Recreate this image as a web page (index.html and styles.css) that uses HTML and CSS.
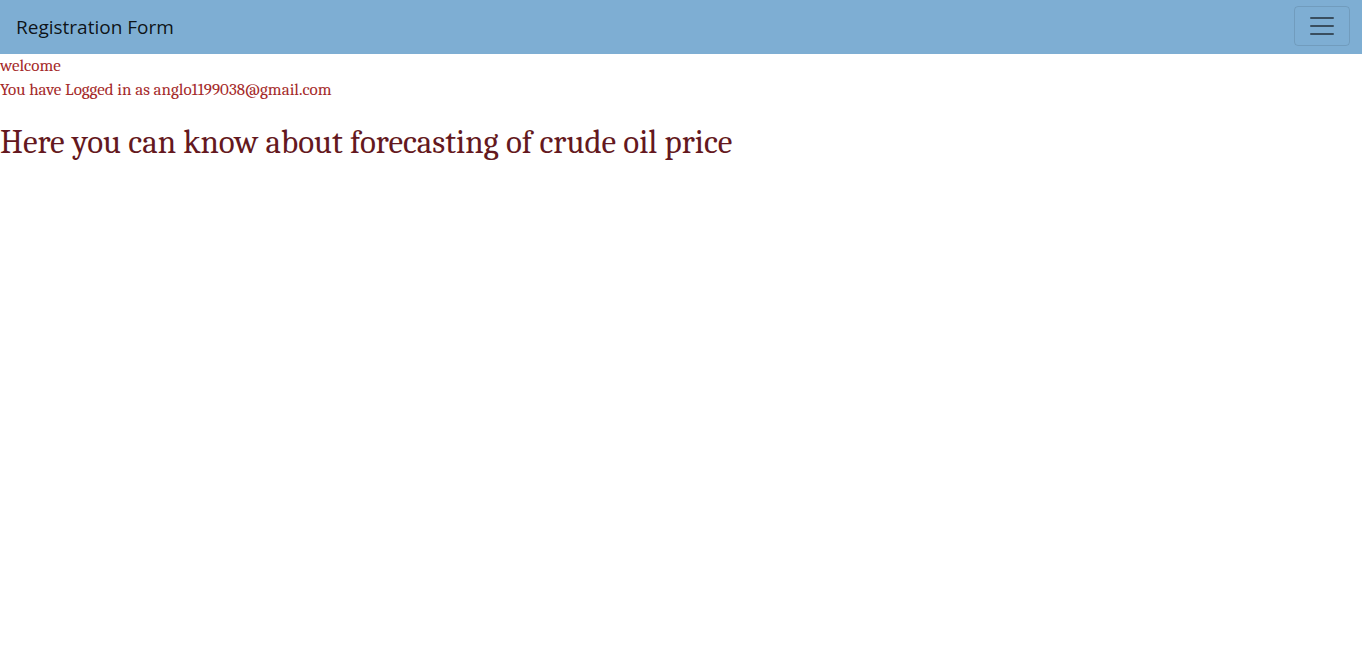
FILE: index.html
```html
<!DOCTYPE html>
<html lang="en">
<head>
<meta charset="utf-8">
<meta name="viewport" content="width=device-width, initial-scale=1">
<title>Registration Form</title>
<link rel="stylesheet" href="styles.css">
</head>
<body>
<nav class="navbar">
  <a class="navbar-brand" href="#">Registration Form</a>
  <button class="navbar-toggler" type="button" aria-label="Toggle navigation">
    <svg class="navbar-toggler-icon" viewBox="0 0 30 30" aria-hidden="true"><path stroke="currentColor" stroke-miterlimit="10" stroke-width="2" stroke-linecap="round" fill="none" d="M4 7h22M4 15h22M4 23h22"/></svg>
  </button>
</nav>
<main class="content">
  <p class="status">welcome<br>You have Logged in as anglo1199038@gmail.com</p>
  <h1 class="headline">Here you can know about forecasting of crude oil price</h1>
</main>
</body>
</html>
```

FILE: styles.css
```css
* {
  box-sizing: border-box;
}

body {
  margin: 0;
  background: #fff;
  font-family: "Open Sans", "Noto Sans", sans-serif;
}

.navbar {
  display: flex;
  align-items: center;
  justify-content: space-between;
  padding: 6px 12px 8px 16px;
  background: #7eaed3;
}

.navbar-brand {
  padding-top: 2px;
  color: rgba(0, 0, 0, 0.9);
  font-size: 19px;
  line-height: 30px;
  text-decoration: none;
}

.navbar-toggler {
  display: flex;
  padding: 4px 12px;
  border: 1px solid rgba(0, 0, 0, 0.1);
  border-radius: 4px;
  background: transparent;
  color: rgba(0, 0, 0, 0.55);
}

.navbar-toggler-icon {
  width: 30px;
  height: 30px;
}

.content {
  font-family: "Cambria", "Caladea", "DejaVu Serif", serif;
}

.status {
  margin: 0;
  color: #a52a2a;
  font-size: 17px;
  line-height: 24px;
}

.headline {
  margin: 20px 0 0;
  color: #641820;
  font-size: 33px;
  font-weight: 400;
  line-height: 40px;
}
```
